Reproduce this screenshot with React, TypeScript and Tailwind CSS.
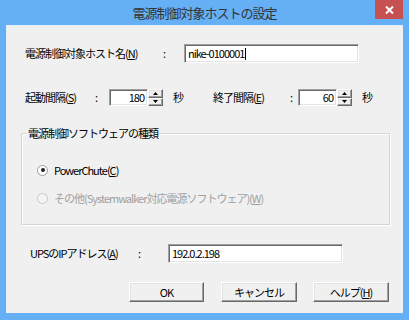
import React from "react";

const font = { fontFamily: '"Noto Sans CJK JP", "Noto Sans", sans-serif' };

function U({ c }: { c: string }) {
  return <span className="underline underline-offset-[1px] decoration-[1px]">{c}</span>;
}

const sunken =
  "bg-white border border-t-[#a0a0a0] border-l-[#a0a0a0] border-b-white border-r-white shadow-[inset_1px_1px_0_#696969,inset_-1px_-1px_0_#e3e3e3]";
const raised =
  "bg-[#f0f0f0] border border-t-white border-l-white border-b-[#696969] border-r-[#696969] shadow-[inset_-1px_-1px_0_#a0a0a0,inset_1px_1px_0_#e3e3e3]";

function SpinBtn({ up }: { up?: boolean }) {
  return (
    <div className={"flex-1 flex items-center justify-center " + raised}>
      <svg width="5" height="3" viewBox="0 0 5 3">
        {up ? <path d="M2.5 0 L5 3 L0 3 Z" fill="#000" /> : <path d="M0 0 L5 0 L2.5 3 Z" fill="#000" />}
      </svg>
    </div>
  );
}

function Spin({ value }: { value: string }) {
  return (
    <div className="flex h-[17px]">
      <div className={"w-[39px] h-full flex items-center justify-end pr-[3px] leading-none " + sunken}>{value}</div>
      <div className="flex flex-col w-[15px] h-full">
        <SpinBtn up />
        <SpinBtn />
      </div>
    </div>
  );
}

function Radio({ checked, disabled }: { checked?: boolean; disabled?: boolean }) {
  return (
    <div
      className={
        "w-[11px] h-[11px] rounded-full border flex items-center justify-center " +
        (disabled ? "border-[#c8c8c8] bg-[#f4f4f4]" : "border-[#9a9a9a] bg-white")
      }
    >
      {checked && <div className="w-[4px] h-[4px] rounded-full bg-[#222]" />}
    </div>
  );
}

export default function App() {
  return (
    <div className="w-[409px] h-[320px] bg-[#65aff5] flex flex-col text-[11px] tracking-[-1px] text-black" style={font}>
      {/* title bar */}
      <div className="h-[25px] grid grid-cols-[1fr_auto_1fr]">
        <div />
        <div className="text-[13px] leading-[25px] text-[#333] tracking-[-1px]">電源制御対象ホストの設定</div>
        <div className="flex justify-end pr-[6px]">
          <div className="w-[28px] h-[19px] bg-[#c75050] flex items-center justify-center">
            <svg width="9" height="8" viewBox="0 0 9 8">
              <path d="M1 0.5 L8 7.5 M8 0.5 L1 7.5" stroke="#fff" strokeWidth="2" />
            </svg>
          </div>
        </div>
      </div>

      {/* client */}
      <div className="mx-[6px] mb-[7px] flex-1 bg-[#f0f0f0] border-l border-t border-[#e6eef7] flex flex-col pt-[18px]">
        <div className="flex items-center h-[19px] pl-[18px]">
          <span className="w-[138px]">
            電源制御対象ホスト名(<U c="N" />)
          </span>
          <span className="w-[21px]">:</span>
          <div className={"w-[175px] h-[19px] flex items-center pl-[3px] " + sunken}>
            nike-0100001<span className="inline-block w-[1px] h-[12px] bg-black ml-[1px]" />
          </div>
        </div>

        <div className="flex items-center h-[17px] mt-[26px] pl-[18px]">
          <span className="w-[70px]">
            起動間隔(<U c="S" />)
          </span>
          <span className="w-[14px]">:</span>
          <Spin value="180" />
          <span className="ml-[10px] w-[12px]">秒</span>
          <span className="ml-[28px] w-[77px]">
            終了間隔(<U c="E" />)
          </span>
          <span className="w-[8px]">:</span>
          <Spin value="60" />
          <span className="ml-[10px]">秒</span>
        </div>

        <div className="relative mt-[27px] ml-[14px] w-[369px] h-[92px] border border-[#d5d5d5] shadow-[1px_1px_0_#fff,inset_1px_1px_0_#fff] flex flex-col pt-[29px] pl-[15px]">
          <span className="absolute left-[5px] top-[-9px] px-[1px] bg-[#f0f0f0]">電源制御ソフトウェアの種類</span>
          <div className="flex items-center h-[14px]">
            <Radio checked />
            <span className="ml-[6px]">
              PowerChute(<U c="C" />)
            </span>
          </div>
          <div className="flex items-center h-[14px] mt-[14px] text-[#a0a0a0]">
            <Radio disabled />
            <span className="ml-[6px]">
              その他(Systemwalker対応電源ソフトウェア)(<U c="W" />)
            </span>
          </div>
        </div>

        <div className="flex items-center h-[19px] mt-[19px] pl-[23px]">
          <span className="w-[108px]">
            UPSのIPアドレス(<U c="A" />)
          </span>
          <span className="w-[30px]">:</span>
          <div className={"w-[175px] h-[19px] flex items-center pl-[3px] " + sunken}>192.0.2.198</div>
        </div>

        <div className="flex mt-[19px] pl-[122px]">
          <div className={"w-[75px] h-[20px] flex items-center justify-center " + raised}>OK</div>
          <div className={"ml-[17px] w-[76px] h-[20px] flex items-center justify-center " + raised}>キャンセル</div>
          <div className={"ml-[16px] w-[76px] h-[20px] flex items-center justify-center " + raised}>
            ヘルプ(<U c="H" />)
          </div>
        </div>
      </div>
    </div>
  );
}
